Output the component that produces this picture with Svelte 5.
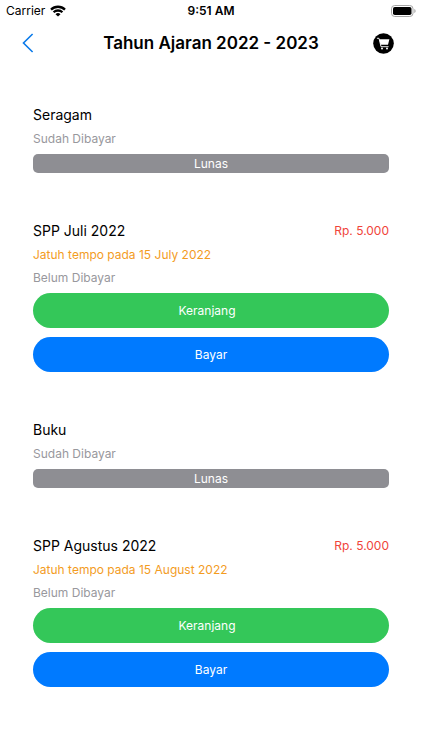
<script>
  const bills = [
    { name: "Seragam", paid: true },
    { name: "SPP Juli 2022", paid: false, price: "Rp. 5.000", due: "15 July 2022" },
    { name: "Buku", paid: true },
    { name: "SPP Agustus 2022", paid: false, price: "Rp. 5.000", due: "15 August 2022" },
  ]
</script>

<div class="status-bar">
  <div class="carrier">
    <span>Carrier</span>
    <svg width="16" height="12" viewBox="0 0 16 12" aria-hidden="true">
      <g fill="none" stroke="#000" stroke-width="2.3">
        <path d="M1 4.6a10 10 0 0 1 14 0" />
        <path d="M3.6 7.3a6.3 6.3 0 0 1 8.8 0" />
      </g>
      <path d="M8 11.6L5.5 9.2a3.5 3.5 0 0 1 5 0z" />
    </svg>
  </div>
  <span class="time">9:51 AM</span>
  <div class="battery">
    <svg width="25" height="12" viewBox="0 0 25 12" aria-hidden="true">
      <rect x="0.5" y="0.5" width="21.5" height="11" rx="3.2" fill="#fff" stroke="#a6a6a6" />
      <rect x="2" y="2" width="18.5" height="8" rx="1.8" />
      <path d="M23.3 4v4c.8-.3 1.3-1.1 1.3-2s-.5-1.7-1.3-2z" fill="#a6a6a6" />
    </svg>
  </div>
</div>

<header>
  <button class="icon-button" aria-label="Kembali">
    <svg width="12" height="20" viewBox="0 0 12 20" aria-hidden="true">
      <path d="M10.6 1L1.500 10l9.100 9" fill="none" stroke="#0a7aea" stroke-width="1.6" />
    </svg>
  </button>
  <h1>Tahun Ajaran 2022 - 2023</h1>
  <button class="icon-button cart" aria-label="Keranjang">
    <svg width="21" height="21" viewBox="0 0 21 21" aria-hidden="true">
      <circle cx="10.5" cy="10.5" r="10.3" />
      <path d="M6.200 6.200h10.200l-1.400 5.500H7.600z" fill="#fff" />
      <path d="M4.300 5.300h1.700l2 8.400h7.200" fill="none" stroke="#fff" stroke-width="0.9" stroke-linejoin="round" stroke-linecap="round" />
      <circle cx="9" cy="15.400" r="1" fill="#fff" />
      <circle cx="14" cy="15.400" r="1" fill="#fff" />
    </svg>
  </button>
</header>

<main>
  {#each bills as bill}
    <section>
      <div class="heading">
        <h2>{bill.name}</h2>
        {#if bill.price}
          <span class="price">{bill.price}</span>
        {/if}
      </div>
      {#if bill.due}
        <p class="due">Jatuh tempo pada {bill.due}</p>
      {/if}
      <p>{bill.paid ? "Sudah Dibayar" : "Belum Dibayar"}</p>
      {#if bill.paid}
        <div class="paid">Lunas</div>
      {:else}
        <div class="actions">
          <button class="add">Keranjang</button>
          <button class="pay">Bayar</button>
        </div>
      {/if}
    </section>
  {/each}
</main>

<style>
  :global(body) {
    background: #fff;
    color: #000;
    font-family: Inter, "Liberation Sans", sans-serif;
    font-size: 12px;
    line-height: 18px;
  }

  svg {
    display: block;
  }

  button {
    appearance: none;
    border: 0;
    padding: 0;
    font: inherit;
    cursor: pointer;
  }

  .status-bar {
    display: grid;
    grid-template-columns: 1fr auto 1fr;
    align-items: center;
    height: 22px;
    padding: 0 6px;
  }

  .carrier {
    display: flex;
    align-items: center;
    gap: 5px;
  }

  .time {
    font-weight: 600;
  }

  .battery {
    display: flex;
    justify-content: flex-end;
  }

  header {
    display: grid;
    grid-template-columns: 1fr auto 1fr;
    align-items: center;
    height: 42px;
    padding: 0 22px;
  }

  h1 {
    margin: 0;
    font-size: 17px;
    line-height: 22px;
    font-weight: 600;
  }

  .icon-button {
    justify-self: start;
    background: transparent;
  }

  .cart {
    justify-self: end;
    padding-right: 6px;
  }

  main {
    display: flex;
    flex-direction: column;
    gap: 48px;
    padding: 41px 33px 60px;
  }

  .heading {
    display: flex;
    justify-content: space-between;
    align-items: center;
  }

  h2 {
    margin: 0;
    font-size: 14px;
    line-height: 20px;
    font-weight: 400;
  }

  .price {
    color: #f0443a;
  }

  p {
    margin: 5px 0 0;
    color: #98989d;
  }

  .due {
    color: #f39c1f;
  }

  .paid {
    margin-top: 6px;
    border-radius: 5px;
    background: #8e8e93;
    color: #fff;
    line-height: 19px;
    text-align: center;
  }

  .actions {
    display: flex;
    flex-direction: column;
    gap: 9px;
    margin-top: 6px;
  }

  .actions button {
    height: 35px;
    border-radius: 18px;
    color: #fff;
  }

  .actions .add {
    padding-right: 8px;
    background: #34c759;
  }

  .pay {
    background: #007aff;
  }
</style>
